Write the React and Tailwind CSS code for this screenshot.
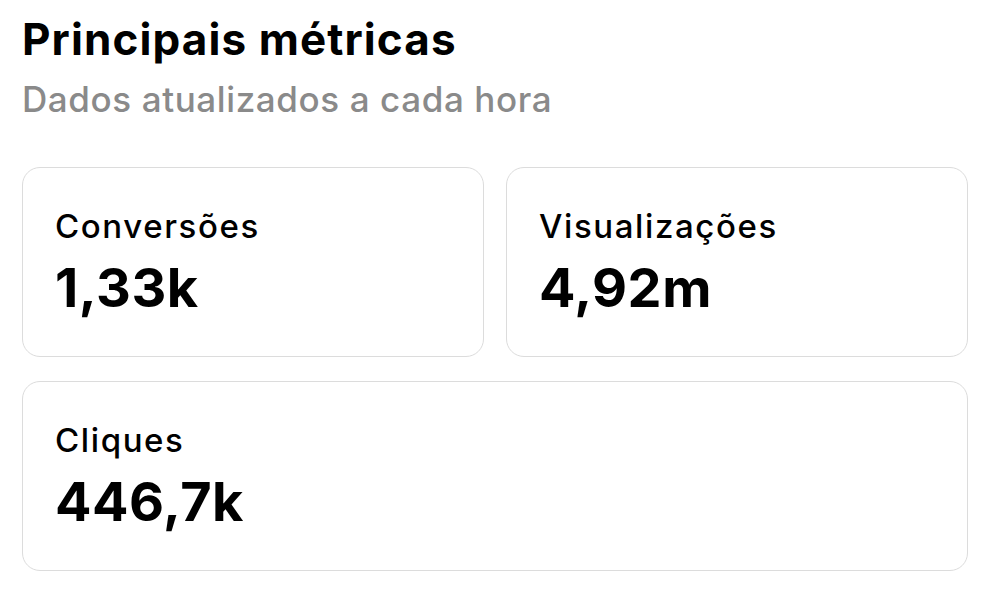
const metrics = [
  { label: "Conversões", value: "1,33k" },
  { label: "Visualizações", value: "4,92m" },
  { label: "Cliques", value: "446,7k", wide: true },
];

const MetricCard = ({ label, value, wide }) => (
  <div
    className={`rounded-[18px] border border-[#dcdcdc] bg-white pl-[32px] pt-[38px] pb-[36px] ${
      wide ? "col-span-2" : ""
    }`}
  >
    <div className="text-[33px] leading-[40px] font-medium tracking-[1.6px] text-black">{label}</div>
    <div className="mt-[10px] text-[54px] leading-[64px] font-bold tracking-[0.5px] text-black">
      {value}
    </div>
  </div>
);

export default function App() {
  return (
    <div
      className="min-h-screen bg-white pl-[22px] pt-[13px]"
      style={{ fontFamily: "Inter, 'Liberation Sans', sans-serif" }}
    >
      <h1 className="text-[44px] leading-[52px] font-bold tracking-[1.1px] text-black">
        Principais métricas
      </h1>
      <p className="mt-[12px] text-[35px] leading-[44px] font-medium tracking-[0.6px] text-[#8a8a8a]">
        Dados atualizados a cada hora
      </p>

      <div className="mt-[46px] grid w-[946px] grid-cols-2 gap-x-[22px] gap-y-[24px]">
        {metrics.map((m) => (
          <MetricCard key={m.label} {...m} />
        ))}
      </div>
    </div>
  );
}
